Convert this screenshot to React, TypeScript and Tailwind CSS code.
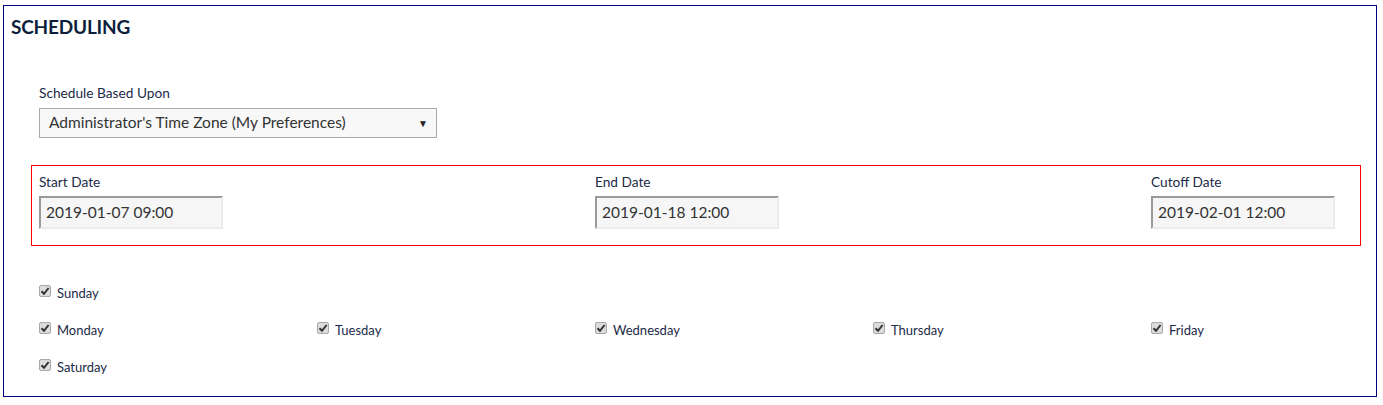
// Scheduling 패널

const font = { fontFamily: "Lato, 'Open Sans', sans-serif" };

function DateField({ label, value }: { label: string; value: string }) {
    return (
        <div className="flex flex-col">
            <span className="text-[13.7px] leading-4 text-[#1b2a47]">{label}</span>
            <div className="mt-[6px] w-[184px] h-[33px] flex items-center pl-[5px] bg-[#f6f6f6] border-2 border-t-[#9a9a9a] border-l-[#9a9a9a] border-r-[#ececec] border-b-[#ececec] text-[15.5px] text-[#333]">
                {value}
            </div>
        </div>
    );
}

function DayCheck({ label }: { label: string }) {
    return (
        <div className="flex items-center h-[37px]">
            <span className="w-[12px] h-[12px] -translate-y-[3px] rounded-[2px] bg-[#dcdcdc] border border-[#a8a8a8] flex items-center justify-center">
                <svg width="10" height="10" viewBox="0 0 10 10">
                    <path d="M1.5 5.2 L4 7.8 L8.6 2" fill="none" stroke="#333" strokeWidth="2" />
                </svg>
            </span>
            <span className="ml-[6px] text-[13px] text-[#1b2a47]">{label}</span>
        </div>
    );
}

export default function App() {
    return (
        <div className="bg-white w-[1383px] h-[405px] pt-[5px] pl-[3px]" style={font}>
            <div className="w-[1374px] h-[392px] border border-[#000080]">
                {/* 제목 */}
                <h2 className="mt-[10px] pl-[7px] text-[19px] leading-[22px] font-bold text-[#0d1f3c] tracking-[-0.2px]">
                    SCHEDULING
                </h2>

                <div className="pl-[35px] pr-[15px]">
                    {/* 기준 시간대 */}
                    <div className="mt-[47px] text-[13.7px] leading-4 text-[#1b2a47]">Schedule Based Upon</div>
                    <div className="mt-[7px] w-[398px] h-[30px] border border-[#a9a9a9] bg-[#f8f8f8] flex items-center justify-between pl-[9px] pr-[8px] text-[15.5px] text-[#333]">
                        <span>Administrator's Time Zone (My Preferences)</span>
                        <span className="text-[10px] text-[#222]">▼</span>
                    </div>

                    {/* 날짜 */}
                    <div className="mt-[27px] -ml-[8px] border border-[#ff0000] pt-[8px] pb-[16px] pl-[7px] grid grid-cols-[556px_556px_1fr]">
                        <DateField label="Start Date" value="2019-01-07 09:00" />
                        <DateField label="End Date" value="2019-01-18 12:00" />
                        <DateField label="Cutoff Date" value="2019-02-01 12:00" />
                    </div>

                    {/* 요일 */}
                    <div className="mt-[29px] grid grid-cols-[278px_278px_278px_278px_1fr]">
                        <DayCheck label="Sunday" />
                        <div className="col-span-4" />
                        <DayCheck label="Monday" />
                        <DayCheck label="Tuesday" />
                        <DayCheck label="Wednesday" />
                        <DayCheck label="Thursday" />
                        <DayCheck label="Friday" />
                        <DayCheck label="Saturday" />
                    </div>
                </div>
            </div>
        </div>
    );
}
